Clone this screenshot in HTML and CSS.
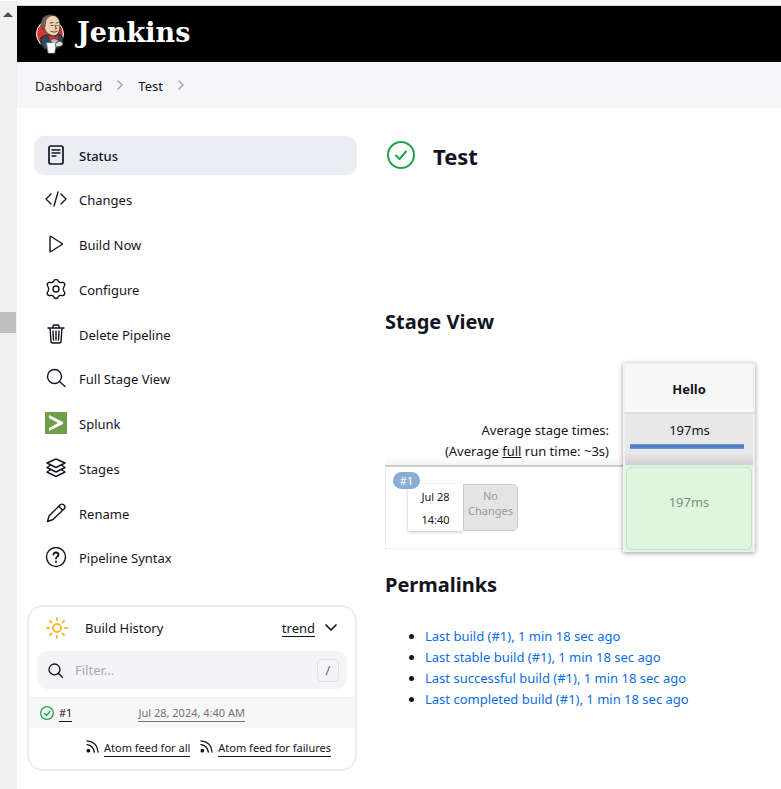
FILE: index.html
```html
<!DOCTYPE html>
<html lang="en">
<head>
<meta charset="utf-8">
<title>Test [Jenkins]</title>
<link rel="stylesheet" href="styles.css">
</head>
<body>
<div class="frame">
  <div class="gutter" aria-hidden="true">
    <div class="gutter-arrow"></div>
    <div class="gutter-thumb"></div>
  </div>
  <div class="page">
    <header class="header">
      <a class="brand" href="#">
        <svg class="brand-logo" viewBox="0 0 30 40" aria-hidden="true">
          <ellipse cx="14" cy="20" rx="13.500" ry="14" fill="#d33833"/>
          <path d="M5 24q4-4 9-3l9-1q3 1 4 5l-1 7-6 3H9q-5-2-4-11z" fill="#2f4a5a" stroke="#14202a"/>
          <path d="M13 21l5 2 3-1 1 5-4 3-4-4z" fill="#a6c0ce" stroke="none"/>
          <path d="M7 9q1-8 9-8 8 1 8 10 0 11-7 11Q8 20 7 9z" fill="#efd3b2" stroke="#30261f" stroke-width=".8"/>
          <path d="M6 13Q4 5 9 2q5-2 8-1-5 1-7 5l-1 7-2 2z" fill="#71675f" stroke="#30261f" stroke-width=".5"/>
          <path d="M14 9l3-.5m3 .5l2-.5M15 11.500h2m4 0h1M19 11l1.500 4H19m-4 2.500q3 1.500 6 0" fill="none" stroke="#50372b" stroke-width=".9"/>
          <path d="M13 21l5 2.500 4-2.500v5l-4-1.500-4 2z" fill="#d33833" stroke="#7d1714" stroke-width=".6"/>
          <path d="M11 29h9l-1.500 10h-6z" fill="#fff" stroke="#c5ccd0" stroke-width=".6"/>
          <path d="M20 29q3-3 6-1 2 3-1 4l-5 1z" fill="#e4ded7" stroke="#42505b" stroke-width=".8"/>
        </svg>
        <span class="brand-name">Jenkins</span>
      </a>
    </header>
    <nav class="crumbs" aria-label="Breadcrumb">
      <a href="#">Dashboard</a>
      <svg class="crumb-sep" viewBox="0 0 8 12" aria-hidden="true"><path d="M2 2l4 4-4 4"/></svg>
      <a href="#">Test</a>
      <svg class="crumb-sep" viewBox="0 0 8 12" aria-hidden="true"><path d="M2 2l4 4-4 4"/></svg>
    </nav>
    <div class="content">
      <aside class="side">
        <nav class="tasks" aria-label="Tasks">
          <a class="task task-active" href="#"><svg class="icon" viewBox="0 0 22 22" aria-hidden="true"><rect x="4" y="2" width="14" height="18" rx="2" stroke-width="1.700"/><path d="M7 6h8M7 9h8M7 12h4"/></svg>Status</a>
          <a class="task" href="#"><svg class="icon" viewBox="0 0 22 22" aria-hidden="true"><path d="M6 6l-5 5 5 5M16 6l5 5-5 5M13 4L9 18"/></svg>Changes</a>
          <a class="task" href="#"><svg class="icon" viewBox="0 0 22 22" aria-hidden="true"><path d="M5 4v14c0 1 0 1 1 .5l11-7q1-.5 0-1L6 3.500Q5 3 5 4z"/></svg>Build Now</a>
          <a class="task" href="#"><svg class="icon" viewBox="0 0 22 22" aria-hidden="true"><circle cx="11" cy="11" r="3"/><path d="M8.500 3.500Q9 1.500 11 1.500t2.500 2q1 1.500 3 1 2-.5 3 1t-.5 3q-1.500 2.500 0 5 1.500 1.500.5 3t-3 1q-2-.5-3 1-.5 2-2.500 2t-2.500-2q-1-1.500-3-1-2 .5-3-1t.5-3q1.500-2.500 0-5-1.500-1.500-.5-3t3-1q2 .5 3-1z"/></svg>Configure</a>
          <a class="task" href="#"><svg class="icon" viewBox="0 0 22 22" aria-hidden="true"><path d="M3 5h16M5 5l1 13q0 2 2 2h6q2 0 2-2l1-13M8 5V3q0-1 1-1h4q1 0 1 1v2M8 8l.5 9M11 8v9M14 8l-.5 9"/></svg>Delete Pipeline</a>
          <a class="task" href="#"><svg class="icon" viewBox="0 0 22 22" aria-hidden="true"><circle cx="9.500" cy="9.500" r="7"/><path d="M15 15l5 4.500"/></svg>Full Stage View</a>
          <a class="task" href="#"><svg class="icon" viewBox="0 0 22 22" aria-hidden="true"><path d="M0 0h22v22H0z" fill="#6da04b" stroke="none"/><path d="M4 3l14 7v2L4 19v-3l9-5-9-5z" fill="#fff" stroke="none"/></svg>Splunk</a>
          <a class="task" href="#"><svg class="icon" viewBox="0 0 22 22" aria-hidden="true"><path d="M11 2l9 4-9 4.500L2 6zM5 8.500L2 10.500l9 4.500 9-4.500-3-2M5 13l-3 2 9 4.500 9-4.500-3-2"/></svg>Stages</a>
          <a class="task" href="#"><svg class="icon" viewBox="0 0 22 22" aria-hidden="true"><path d="M2.500 19.500L4 14 15.500 2.500q1.500-1 3.500.5 1.500 2 .5 3.500L8 17.500zM14 4.500L17.500 8"/></svg>Rename</a>
          <a class="task" href="#"><svg class="icon" viewBox="0 0 22 22" aria-hidden="true"><circle cx="11" cy="11" r="9.500"/><path d="M8.500 8.500C8.500 5.500 13.500 6 13.500 9c-.5 2-2.500 1.500-2.500 3.500M11 15.500v.5" stroke-width="1.800"/></svg>Pipeline Syntax</a>
        </nav>
        <section class="history">
          <div class="history-head">
            <svg class="icon sun" viewBox="0 0 22 22" aria-hidden="true"><circle cx="11" cy="11" r="4"/><path d="M11 1v2M11 19v2M1 11h2M19 11h2M4 4l1.500 1.500M16.500 16.500L18 18M4 18l1.500-1.500M16.500 5.500L18 4"/></svg>
            <h2 class="history-title">Build History</h2>
            <a class="under" href="#">trend</a>
            <svg class="chevron" viewBox="0 0 12 8" aria-hidden="true"><path d="M1 1l5 5 5-5"/></svg>
          </div>
          <label class="filter">
            <svg class="filter-icon" viewBox="0 0 22 22" aria-hidden="true"><circle cx="9.500" cy="9.500" r="8"/><path d="M15.500 15.500l5.500 5.500"/></svg>
            <input class="filter-input" type="text" placeholder="Filter..." aria-label="Filter builds">
            <kbd class="key">/</kbd>
          </label>
          <div class="build">
            <svg class="ok ok-small" viewBox="0 0 14 14" aria-hidden="true"><circle cx="7" cy="7" r="6.300"/><path d="M4.500 7.500L6.500 9.500l3.500-4"/></svg>
            <a class="under build-id" href="#">#1</a>
            <a class="under build-date" href="#">Jul 28, 2024, 4:40 AM</a>
          </div>
          <div class="feeds">
            <svg class="rss" viewBox="0 0 14 14" aria-hidden="true"><path d="M1 1q11 1 12 12M1 5q7 1 8 8"/><circle cx="2.500" cy="11.500" r="2"/></svg>
            <a class="under" href="#">Atom feed for all</a>
            <svg class="rss rss-next" viewBox="0 0 14 14" aria-hidden="true"><path d="M1 1q11 1 12 12M1 5q7 1 8 8"/><circle cx="2.500" cy="11.500" r="2"/></svg>
            <a class="under" href="#">Atom feed for failures</a>
          </div>
        </section>
      </aside>
      <main class="main">
        <div class="title">
          <svg class="ok" viewBox="0 0 28 28" aria-hidden="true"><circle cx="14" cy="14" r="13"/><path d="M9 14.500l3.500 3.500L19 10.500"/></svg>
          <h1>Test</h1>
        </div>
        <h2 class="heading">Stage View</h2>
        <table class="stages">
          <thead>
            <tr><td></td><th class="stage stage-name" scope="col">Hello</th></tr>
          </thead>
          <tbody>
            <tr>
              <td class="avg-label">Average stage times:<br>(Average <u>full</u> run time: ~3s)</td>
              <td class="stage stage-avg">197ms<div class="bar"></div></td>
            </tr>
            <tr>
              <td class="run-cell">
                <div class="run">
                  <div class="run-info">
                    <span class="badge">#1</span>
                    <div class="run-date"><span>Jul 28</span><span>14:40</span></div>
                    <div class="run-changes">No<br>Changes</div>
                  </div>
                </div>
              </td>
              <td class="stage stage-run"><div class="stage-ok">197ms</div></td>
            </tr>
          </tbody>
        </table>
        <h2 class="heading">Permalinks</h2>
        <ul class="links">
          <li><a href="#">Last build (#1), 1 min 18 sec ago</a></li>
          <li><a href="#">Last stable build (#1), 1 min 18 sec ago</a></li>
          <li><a href="#">Last successful build (#1), 1 min 18 sec ago</a></li>
          <li><a href="#">Last completed build (#1), 1 min 18 sec ago</a></li>
        </ul>
      </main>
    </div>
  </div>
</div>
</body>
</html>
```
FILE: styles.css
```css
* { box-sizing: border-box; }
body { margin: 0; background: #fff; color: #14141f; font: 13px/22px "Noto Sans", "Open Sans", sans-serif; }
a { color: inherit; text-decoration: none; }
h1, h2 { margin: 0; }
svg { flex: none; fill: none; stroke: currentColor; stroke-linecap: round; stroke-linejoin: round; }

.frame { display: flex; min-height: 100vh; }
.gutter { flex: none; width: 17px; padding-top: 11px; background: #f0f0f0; border-top: 1px solid #fff; }
.gutter-arrow { width: 10px; height: 5px; margin-left: 3px; background: #505050; clip-path: polygon(50% 0, 100% 100%, 0 100%); }
.gutter-thumb { width: 16px; height: 21px; margin-top: 295px; background: #c0c0c0; }
.page { flex: 1; min-width: 0; border-top: 5px solid #f8f8fa; }

.header { display: flex; align-items: center; height: 57px; padding: 0 19px; background: #000; border-top: 1px solid #d0dcd4; }
.brand { display: flex; align-items: center; gap: 11px; color: #fff; }
.brand-logo { width: 30px; height: 40px; }
.brand-name { padding-bottom: 3px; font: bold 27px/36px "DejaVu Serif", serif; }

.crumbs { display: flex; align-items: center; gap: 14px; height: 46px; padding: 2px 18px 0; background: #f6f6f9; }
.crumb-sep { width: 8px; height: 12px; margin-bottom: 2px; color: #a5a5b5; stroke-width: 1.5; }

.content { display: flex; gap: 28px; padding: 28px 26px 18px 10px; }
.side { flex: none; width: 330px; }
.tasks { display: flex; flex-direction: column; justify-content: space-between; min-height: 442px; margin-left: 7px; }
.task { display: flex; align-items: center; gap: 12px; height: 39px; padding: 0 11px; border-radius: 10px; }
.task-active { background: #ececf3; font-weight: 500; }
.icon { width: 22px; height: 22px; margin-bottom: 2px; stroke-width: 1.4; }

.history { margin-top: 27px; border: 2px solid #ebebf2; border-radius: 16px; }
.history-head { display: flex; align-items: center; height: 44px; padding: 0 18px 2px 17px; }
.sun { margin-bottom: 0; color: #fdb526; stroke-width: 1.8; }
.history-title { flex: 1; margin-left: 17px; font-size: 13px; font-weight: 400; }
.chevron { width: 12px; height: 8px; margin-left: 10px; stroke-width: 1.7; }
.under { border-bottom: 1px solid; line-height: 16px; }
.filter { display: flex; align-items: center; gap: 12px; height: 38px; margin: 0 8px 8px; padding: 0 8px 0 11px; border-radius: 10px; background: #f3f3f8; }
.filter-icon { width: 15px; height: 15px; stroke-width: 2; }
.filter-input { flex: 1; min-width: 0; padding: 0; border: 0; outline: 0; background: none; color: inherit; font: inherit; }
.filter-input::placeholder { color: #a9a9bc; opacity: 1; }
.key { width: 22px; height: 23px; border: 1px solid #dddde8; border-radius: 5px; color: #62627a; font: 13px/21px "Noto Sans", sans-serif; text-align: center; }
.build { display: flex; align-items: center; height: 31px; padding: 0 11px; border-top: 1px solid #f0f0f2; background: #f7f7f7; font-size: 11px; }
.ok { width: 28px; height: 28px; color: #1ea64b; stroke-width: 2; }
.ok-small { width: 14px; height: 14px; stroke-width: 1.3; }
.build-id { margin-left: 5px; }
.build-date { margin-left: 66px; color: #73737a; }
.feeds { display: flex; align-items: center; gap: 5px; height: 41px; padding: 0 24px; justify-content: flex-end; font-size: 11px; }
.rss { width: 13px; height: 13px; margin-bottom: 4px; stroke-width: 1.4; }
.rss circle { fill: currentColor; stroke: none; }
.rss-next { margin-left: 5px; }

.main { flex: 1; min-width: 0; }
.title { display: flex; align-items: center; gap: 18px; height: 37px; padding-left: 2px; }
.title h1 { padding-top: 2px; font-size: 22px; line-height: 30px; }
.heading { font-size: 20px; line-height: 30px; }
.title + .heading { margin-top: 134px; }
.stages { width: 370px; margin: 26px 0 18px; border-collapse: separate; border-spacing: 0; }
.stages td, .stages th { padding: 0; }
.stage { width: 132px; border: solid #f0f0f3; border-width: 0 2px; text-align: center; vertical-align: top; }
.stages .stage-name { height: 51px; border-top-width: 2px; border-bottom: 2px solid #ddd; background: #f7f7f7; vertical-align: middle; }
.stages .stage-avg { height: 51px; padding: 5px 4px 0 5px; background: linear-gradient(#e8e8e8 75%, #cfcfcf); }
.bar { width: 114px; height: 5px; margin-top: 3px; background: linear-gradient(#6f9ad6, #4a78c0, #6f9ad6); }
.stages .avg-label { padding: 6px 14px 0 0; text-align: right; line-height: 21px; background: linear-gradient(#fff 85%, #f3f3f3); vertical-align: top; }
.run-cell { vertical-align: top; }
.run { height: 84px; padding: 17px 0 0 22px; border: solid #eee; border-width: 2px 0 1px 1px; border-top-color: #ccc; }
.run-info { position: relative; display: flex; width: 110px; height: 47px; font-size: 11px; text-align: center; }
.badge { position: absolute; top: -12px; left: -15px; z-index: 1; width: 27px; border-radius: 9px; background: #8aaed2; color: #fff; line-height: 17px; }
.run-date { display: flex; flex-direction: column; width: 55px; padding-top: 1px; line-height: 23px; background: #fff; box-shadow: 0 1px 3px rgba(0, 0, 0, 0.25); }
.run-changes { width: 55px; padding-top: 3px; border: 1px solid #ccc; border-radius: 0 5px 5px 0; background: #e4e4e4; color: #999; line-height: 15px; }
.stages .stage-run { position: relative; height: 87px; padding: 2px 1px 0; border-bottom-width: 1px; background: #ddf7dd; }
/* One shadow around the whole stage column */
.stage-run::before { content: ""; position: absolute; inset: -102px -2px -1px; box-shadow: 0 1px 5px rgba(0, 0, 0, 0.4); pointer-events: none; }
.stage-ok { height: 83px; padding-top: 23px; border: 1px solid #d0d8d0; border-radius: 5px; color: #7e8e7e; }
.links { margin: 26px 0 0; padding-left: 40px; line-height: 21px; }
.links a { color: #0b6ee0; }
```
